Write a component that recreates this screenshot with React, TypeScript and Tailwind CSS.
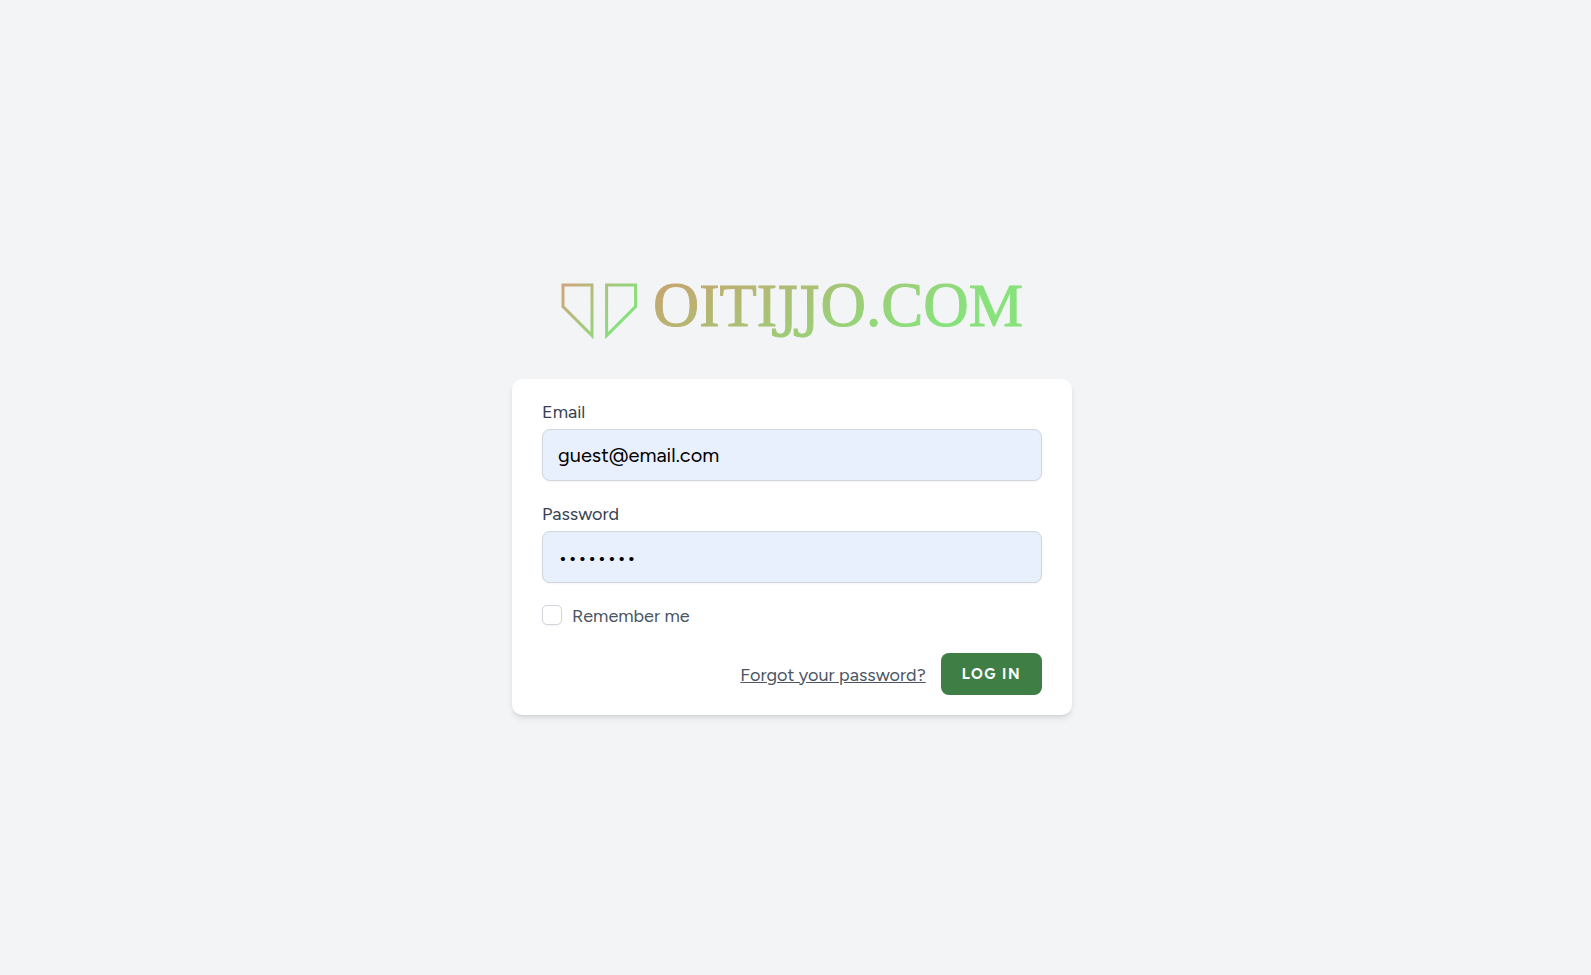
function Logo() {
  return (
    <svg viewBox="0 0 560 90" className="w-full" role="img" aria-label="OITIJJO.COM">
      <defs>
        <linearGradient id="mark" gradientUnits="userSpaceOnUse" x1="50" y1="28" x2="106" y2="66">
          <stop offset="0" stopColor="#cfa67c" />
          <stop offset="1" stopColor="#86e07a" />
        </linearGradient>
        <linearGradient id="word" gradientUnits="userSpaceOnUse" x1="150" y1="14" x2="240" y2="170">
          <stop offset="0" stopColor="#c9a26e" />
          <stop offset="1" stopColor="#88e27c" />
        </linearGradient>
        <filter id="soft">
          <feGaussianBlur stdDeviation="0.7" />
        </filter>
      </defs>
      <g filter="url(#soft)">
        <g fill="none" stroke="url(#mark)" strokeWidth="3">
          <path d="M51 25H80V75.6L51 46.6Z" />
          <path d="M94.6 25H123.6V46.6L94.6 75.6Z" />
        </g>
        <text x="141" y="66" fontSize="61" fill="url(#word)" stroke="url(#word)" strokeWidth="1" className="font-['Liberation_Serif',serif]">
          <tspan fontSize="64">O</tspan>ITI
          <tspan className="font-['DejaVu_Serif',serif]" fontSize="54">JJ</tspan>
          <tspan fontSize="63">O</tspan>.<tspan fontSize="63">CO</tspan>M
        </text>
      </g>
    </svg>
  );
}

const labelClass = "block text-[18px] leading-[27px] text-[#374151]";
const inputClass =
  "mt-[3px] block h-[52px] w-full rounded-lg border border-gray-300 bg-[#e8f0fe] px-[15px] text-[20px] text-black shadow-xs outline-none focus:border-indigo-500";

export default function App() {
  return (
    <div className="flex min-h-screen flex-col items-center justify-center bg-[#f3f4f6] pr-[7px] font-['Figtree','Lato',sans-serif] text-gray-900">
      <a href="/" className="block w-full max-w-[560px]">
        <Logo />
      </a>
      <main className="mt-[29px] w-full max-w-[560px] rounded-[10px] bg-white px-[30px] py-5 shadow-md">
        <form onSubmit={(e) => e.preventDefault()}>
          <label htmlFor="email" className={labelClass}>
            Email
          </label>
          <input id="email" type="email" defaultValue="guest@email.com" className={inputClass} />
          <label htmlFor="password" className={`mt-5 ${labelClass}`}>
            Password
          </label>
          <input id="password" type="password" defaultValue="password" className={inputClass} />
          <label className="mt-5 flex items-start gap-[10px] text-[18px] leading-[27px] text-[#4b5563]">
            <input
              type="checkbox"
              className="mt-0.5 size-5 appearance-none rounded-[5px] border border-gray-300 bg-white shadow-xs checked:bg-indigo-600"
            />
            Remember me
          </label>
          <div className="mt-[23px] flex items-center justify-end gap-[15px]">
            <a href="#forgot" className="pt-0.5 text-[18px] leading-[25px] text-[#4b5563] underline">
              Forgot your password?
            </a>
            <button
              type="submit"
              className="h-[42px] rounded-lg bg-[#3f7e44] px-[21px] text-[15px] leading-5 font-bold tracking-widest text-white uppercase"
            >
              Log in
            </button>
          </div>
        </form>
      </main>
    </div>
  );
}
